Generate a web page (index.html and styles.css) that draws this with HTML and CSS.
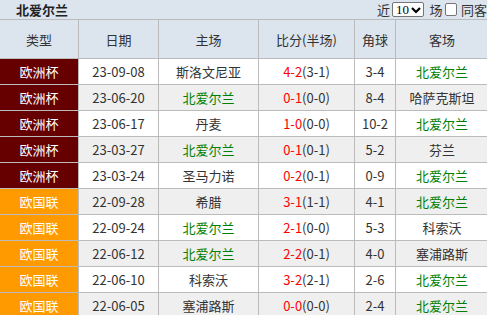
FILE: index.html
```html
<!DOCTYPE html>
<html lang="zh-CN">
<head>
<meta charset="utf-8">
<title>北爱尔兰</title>
<link rel="stylesheet" href="styles.css">
</head>
<body>
<div class="wrap">
  <div class="titlebar">
    <div class="title">北爱尔兰</div>
    <div class="ctrl">
      <span class="lbl">近</span>
      <span class="sel"><span class="selv">10</span><svg class="chev" width="10" height="8" viewBox="0 0 10 8"><path d="M1 2 L5 6 L9 2" fill="none" stroke="#000" stroke-width="2.2"/></svg></span>
      <span class="lbl">场</span>
      <span class="chk"></span>
      <span class="lbl">同客</span>
    </div>
  </div>
  <div class="grid">
    <div class="hd">类型</div><div class="hd">日期</div><div class="hd">主场</div><div class="hd">比分(半场)</div><div class="hd">角球</div><div class="hd last">客场</div>

    <div class="c t-cup">欧洲杯</div><div class="c">23-09-08</div><div class="c">斯洛文尼亚</div><div class="c"><span class="r">4-2</span>(3-1)</div><div class="c">3-4</div><div class="c last g">北爱尔兰</div>

    <div class="c t-cup">欧洲杯</div><div class="c alt">23-06-20</div><div class="c alt g">北爱尔兰</div><div class="c alt"><span class="r">0-1</span>(0-0)</div><div class="c alt">8-4</div><div class="c alt last">哈萨克斯坦</div>

    <div class="c t-cup">欧洲杯</div><div class="c">23-06-17</div><div class="c">丹麦</div><div class="c"><span class="r">1-0</span>(0-0)</div><div class="c">10-2</div><div class="c last g">北爱尔兰</div>

    <div class="c t-cup">欧洲杯</div><div class="c alt">23-03-27</div><div class="c alt g">北爱尔兰</div><div class="c alt"><span class="r">0-1</span>(0-1)</div><div class="c alt">5-2</div><div class="c alt last">芬兰</div>

    <div class="c t-cup">欧洲杯</div><div class="c">23-03-24</div><div class="c">圣马力诺</div><div class="c"><span class="r">0-2</span>(0-1)</div><div class="c">0-9</div><div class="c last g">北爱尔兰</div>

    <div class="c t-nl">欧国联</div><div class="c alt">22-09-28</div><div class="c alt">希腊</div><div class="c alt"><span class="r">3-1</span>(1-1)</div><div class="c alt">4-1</div><div class="c alt last g">北爱尔兰</div>

    <div class="c t-nl">欧国联</div><div class="c">22-09-24</div><div class="c g">北爱尔兰</div><div class="c"><span class="r">2-1</span>(0-0)</div><div class="c">5-3</div><div class="c last">科索沃</div>

    <div class="c t-nl">欧国联</div><div class="c alt">22-06-12</div><div class="c alt g">北爱尔兰</div><div class="c alt"><span class="r">2-2</span>(0-1)</div><div class="c alt">4-0</div><div class="c alt last">塞浦路斯</div>

    <div class="c t-nl">欧国联</div><div class="c">22-06-10</div><div class="c">科索沃</div><div class="c"><span class="r">3-2</span>(2-1)</div><div class="c">2-6</div><div class="c last g">北爱尔兰</div>

    <div class="c t-nl">欧国联</div><div class="c alt">22-06-05</div><div class="c alt">塞浦路斯</div><div class="c alt"><span class="r">0-0</span>(0-0)</div><div class="c alt">2-4</div><div class="c alt last g">北爱尔兰</div>
  </div>
</div>
</body>
</html>
```

FILE: styles.css
```css
html, body {
  margin: 0;
  padding: 0;
  background: #ffffff;
  overflow: hidden;
}
.wrap {
  width: 487px;
  height: 315px;
  overflow: hidden;
  font-family: "Noto Sans CJK SC", "Microsoft YaHei", sans-serif;
  font-size: 13px;
  color: #333333;
}
.titlebar {
  height: 19px;
  background: #dce4ee;
  display: flex;
  align-items: center;
  justify-content: space-between;
  white-space: nowrap;
}
.title {
  font-weight: bold;
  padding-left: 16px;
  color: #222222;
  line-height: 19px;
}
.ctrl {
  display: flex;
  align-items: center;
  width: 110px;
  flex: none;
  overflow: hidden;
  color: #333333;
}
.lbl {
  line-height: 19px;
}
.sel {
  display: flex;
  align-items: center;
  justify-content: space-between;
  box-sizing: border-box;
  width: 33px;
  height: 15px;
  margin: 0 6px 0 2px;
  border: 1px solid #767676;
  border-radius: 2px;
  background: #ffffff;
  padding: 0 2px 0 3px;
}
.selv {
  font-family: "Liberation Serif", serif;
  font-size: 13px;
  line-height: 13px;
  color: #000;
}
.chev {
  display: block;
}
.chk {
  box-sizing: border-box;
  width: 13px;
  height: 13px;
  border: 1px solid #767676;
  border-radius: 2px;
  background: #fff;
  margin: 0 4px 0 2px;
}
.grid {
  display: grid;
  grid-template-columns: 79px 80px 100px 96px 41px 92px;
  grid-template-rows: 39px;
  grid-auto-rows: 26px;
  border-top: 1px solid #bbbbbb;
}
.grid > div {
  box-sizing: border-box;
  border-right: 1px solid #bbbbbb;
  border-bottom: 1px solid #bbbbbb;
  display: flex;
  align-items: center;
  justify-content: center;
  white-space: nowrap;
}
.grid > .last {
  border-right: none;
}
.grid > .hd {
  background: #dce4ee;
  color: #333333;
}
.c {
  background: #ffffff;
}
.c.alt {
  background: #efefef;
}
.grid > .t-cup {
  background: #660000;
  color: #ffffff;
}
.grid > .t-nl {
  background: #ff9a00;
  color: #ffffff;
}
.g {
  color: #008000;
}
.r {
  color: #ff0000;
}
```
